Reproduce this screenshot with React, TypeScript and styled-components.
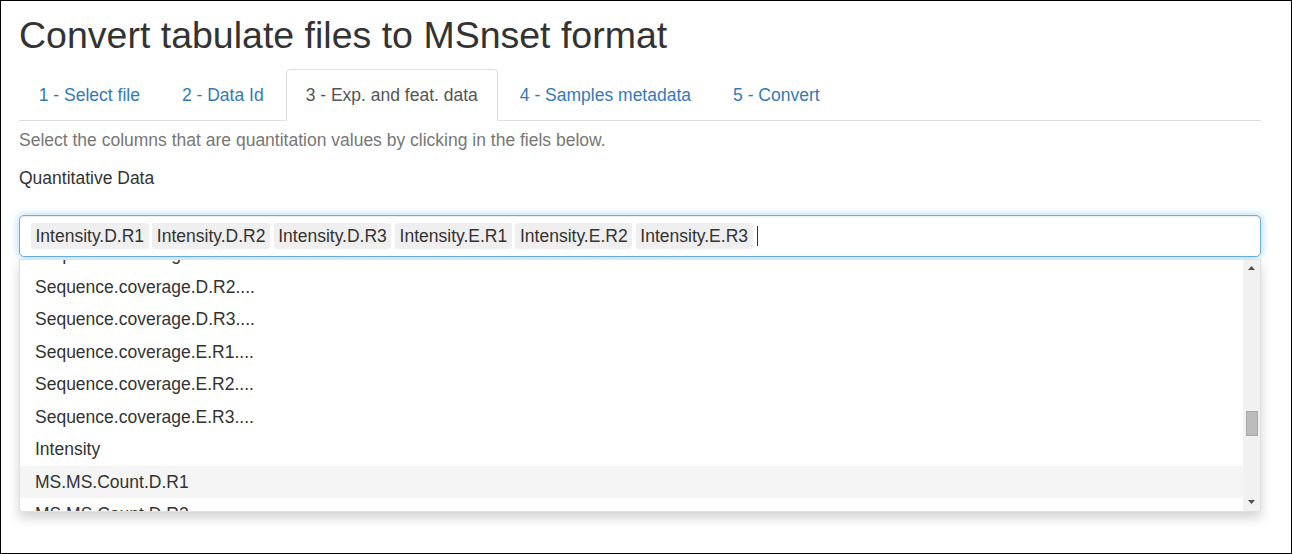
import React from "react";
import styled, { createGlobalStyle } from "styled-components";

const GlobalStyle = createGlobalStyle`
  html, body { margin: 0; padding: 0; background: #fff; }
  body {
    font-family: "Liberation Sans", Arial, Helvetica, sans-serif;
    font-size: 17.5px;
    line-height: 25px;
    color: #333;
  }
  * { box-sizing: border-box; }
`;

const Frame = styled.div`
  width: 1292px;
  height: 554px;
  border: 1px solid #000;
  padding: 0 30px 0 18px;
  overflow: hidden;
`;

const Title = styled.h2`
  margin: 14px 0 12.5px;
  font-size: 37.5px;
  line-height: 1.1;
  font-weight: 500;
  color: #333;
`;

const Tabs = styled.ul`
  display: flex;
  margin: 0;
  padding: 0;
  list-style: none;
  border-bottom: 1px solid #ddd;
`;

const Tab = styled.li<{ $active?: boolean }>`
  margin: 0 2.5px -1px 0;
  padding: 13.5px 18.75px 11.5px;
  line-height: 25px;
  font-size: 17.5px;
  border: 1px solid ${(p) => (p.$active ? "#ddd" : "transparent")};
  border-bottom-color: ${(p) => (p.$active ? "#fff" : "transparent")};
  border-radius: 5px 5px 0 0;
  background: ${(p) => (p.$active ? "#fff" : "transparent")};
  color: ${(p) => (p.$active ? "#555" : "#337ab7")};
`;

const Hint = styled.p`
  margin: 7px 0 13.5px;
  color: #777;
`;

const Label = styled.div`
  margin-bottom: 23.5px;
  color: #333;
`;

const Control = styled.div`
  display: flex;
  flex-direction: column;
`;

const Input = styled.div`
  display: flex;
  align-items: center;
  flex-wrap: wrap;
  gap: 3.75px;
  height: 42px;
  padding: 1px 11px 0;
  border: 1px solid #66afe9;
  border-radius: 5px;
  box-shadow: inset 0 1px 1px rgba(0, 0, 0, 0.075), 0 0 8px rgba(102, 175, 233, 0.6);
  background: #fff;
`;

const Item = styled.span`
  padding: 0 4.5px;
  line-height: 26px;
  background: #efefef;
  color: #333;
  border-radius: 3px;
`;

const Caret = styled.span`
  width: 1px;
  height: 20px;
  margin-left: 1px;
  background: #333;
`;

const Dropdown = styled.div`
  display: flex;
  margin-top: 2px;
  height: 253px;
  border: 1px solid rgba(0, 0, 0, 0.12);
  border-radius: 0 0 4px 4px;
  box-shadow: 0 6px 12px rgba(0, 0, 0, 0.175);
  background: #fff;
  overflow: hidden;
`;

const List = styled.div`
  flex: 1;
  overflow: hidden;
`;

const ListInner = styled.div`
  margin-top: -21.5px;
`;

const Option = styled.div<{ $active?: boolean }>`
  padding: 3.75px 15px;
  line-height: 25px;
  color: #333;
  background: ${(p) => (p.$active ? "#f5f5f5" : "transparent")};
`;

const Scrollbar = styled.div`
  width: 17px;
  display: flex;
  flex-direction: column;
  background: #f1f1f1;
`;

const Arrow = styled.div`
  height: 17px;
  display: flex;
  align-items: center;
  justify-content: center;
  svg { display: block; }
`;

const Track = styled.div`
  flex: 1;
  display: flex;
  flex-direction: column;
`;

const ThumbSpacer = styled.div<{ $offset: number }>`
  height: ${(p) => p.$offset}px;
  flex: none;
`;

const Thumb = styled.div`
  margin: 0 2px 0 3px;
  height: 25px;
  background: #bcbcbc;
  border: 1px solid #a9a9a9;
`;

const tabs = [
  "1 - Select file",
  "2 - Data Id",
  "3 - Exp. and feat. data",
  "4 - Samples metadata",
  "5 - Convert",
];

const items = [
  "Intensity.D.R1",
  "Intensity.D.R2",
  "Intensity.D.R3",
  "Intensity.E.R1",
  "Intensity.E.R2",
  "Intensity.E.R3",
];

const options = [
  "Sequence.coverage.D.R1....",
  "Sequence.coverage.D.R2....",
  "Sequence.coverage.D.R3....",
  "Sequence.coverage.E.R1....",
  "Sequence.coverage.E.R2....",
  "Sequence.coverage.E.R3....",
  "Intensity",
  "MS.MS.Count.D.R1",
  "MS.MS.Count.D.R2",
];

export default function App() {
  return (
    <>
      <GlobalStyle />
      <Frame>
        <Title>Convert tabulate files to MSnset format</Title>
        <Tabs>
          {tabs.map((t, i) => (
            <Tab key={t} $active={i === 2}>
              {t}
            </Tab>
          ))}
        </Tabs>
        <Hint>Select the columns that are quantitation values by clicking in the fiels below.</Hint>
        <Label>Quantitative Data</Label>
        <Control>
          <Input>
            {items.map((it) => (
              <Item key={it}>{it}</Item>
            ))}
            <Caret />
          </Input>
          <Dropdown>
            <List>
              <ListInner>
                {options.map((o) => (
                  <Option key={o} $active={o === "MS.MS.Count.D.R1"}>
                    {o}
                  </Option>
                ))}
              </ListInner>
            </List>
            <Scrollbar>
              <Arrow>
                <svg width="7" height="4" viewBox="0 0 7 4">
                  <path d="M0 4 L3.5 0 L7 4 Z" fill="#505050" />
                </svg>
              </Arrow>
              <Track>
                <ThumbSpacer $offset={134} />
                <Thumb />
              </Track>
              <Arrow>
                <svg width="7" height="4" viewBox="0 0 7 4">
                  <path d="M0 0 L3.5 4 L7 0 Z" fill="#505050" />
                </svg>
              </Arrow>
            </Scrollbar>
          </Dropdown>
        </Control>
      </Frame>
    </>
  );
}
